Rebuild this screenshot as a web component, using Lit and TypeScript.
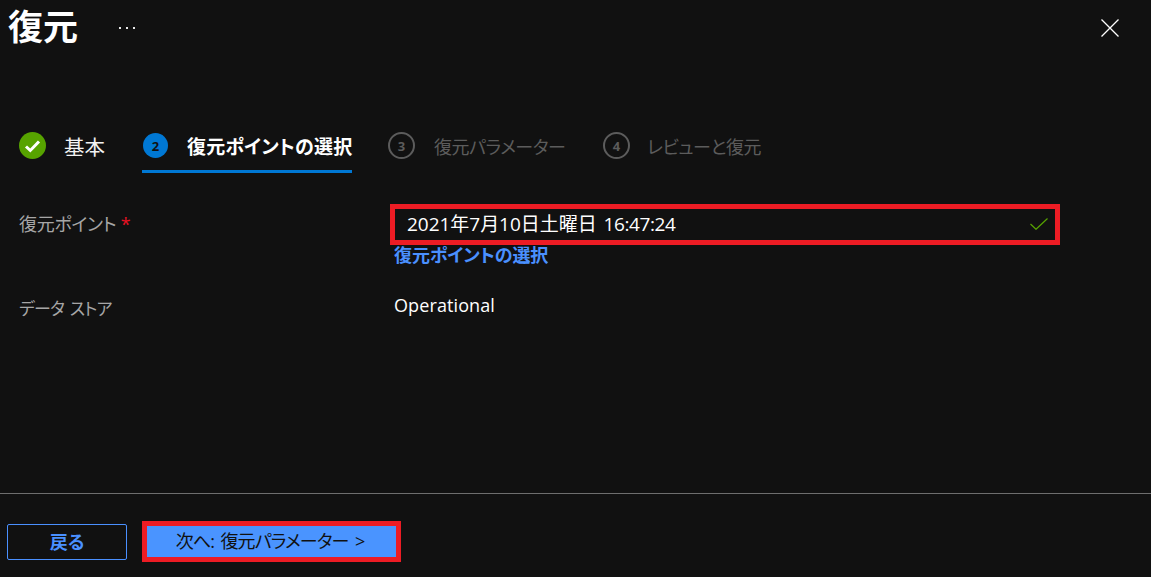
import { html, css, LitElement } from 'lit';
import { customElement } from 'lit/decorators.js';

const steps = [
  { n: 1, label: '基本', state: 'done' },
  { n: 2, label: '復元ポイントの選択', state: 'active' },
  { n: 3, label: '復元パラメーター', state: 'todo' },
  { n: 4, label: 'レビューと復元', state: 'todo' },
];

@customElement('app-root')
export class AppRoot extends LitElement {
  static styles = css`
    :host {
      display: block;
      width: 1151px;
      height: 577px;
      overflow: hidden;
      background: #111111;
      color: #fff;
      font-family: "Open Sans", "Noto Sans CJK JP", sans-serif;
      font-feature-settings: "palt";
    }
    .page { display: flex; flex-direction: column; height: 577px; }

    .header {
      display: flex;
      align-items: center;
      height: 56px;
      padding: 0 32px 0 8px;
    }
    .title { font-size: 35px; font-weight: 700; line-height: 54px; margin-bottom: 2px; width: 111px; }
    .more { display: flex; gap: 5px; }
    .more i { width: 2px; height: 2px; background: #e8e8e8; display: block; }
    .close { margin-left: auto; display: block; }

    .steps { display: flex; margin-top: 65px; padding-left: 19px; height: 52px; }
    .step { display: flex; align-items: center; height: 52px; box-sizing: border-box; border-bottom: 3px solid transparent; }
    .step.s1 { width: 123px; }
    .step.s2 { width: 210px; border-bottom-color: #0078d4; margin-right: 36px; padding-left: 1px; }
    .step.s3 { width: 215px; }
    .badge {
      width: 27px;
      height: 27px;
      box-sizing: border-box;
      border-radius: 50%;
      display: flex;
      align-items: center;
      justify-content: center;
      font-size: 13px;
      font-weight: 700;
      flex: none;
      margin-right: 19px;
    }
    .done .badge { background: #57a300; margin-right: 18px; }
    .active .badge { background: #0078d4; color: #111; width: 25px; height: 25px; }
    .todo .badge { border: 2px solid #5c5c5c; color: #5c5c5c; }
    .s4 .badge { margin-right: 17px; }
    .label { font-size: 18px; letter-spacing: -0.45px; white-space: nowrap; }
    .done .label { color: #f2f2f2; font-size: 20.5px; letter-spacing: 0; }
    .active .label { font-size: 19px; letter-spacing: 0.2px; font-weight: 700; }
    .todo .label { color: #5c5c5c; }

    .form {
      display: grid;
      grid-template-columns: 371px 670px;
      padding: 31px 0 0 19px;
      font-size: 18px;
    }
    .field-label { color: #a6a6a6; line-height: 41px; letter-spacing: -0.3px; }
    .req { color: #e81123; }
    .field-value { display: flex; flex-direction: column; }
    .input {
      display: flex;
      align-items: center;
      justify-content: space-between;
      height: 41px;
      box-sizing: border-box;
      border: 5px solid #ed1c24;
      padding: 0 7px 0 12px;
      font-size: 19px;
      letter-spacing: -0.03px;
    }
    .input span { margin-bottom: 4px; }
    .input .time { margin: 0 0 0 2px; letter-spacing: -0.4px; }
    .input svg { margin-bottom: 1px; }
    .link { color: #4a90ff; font-weight: 700; margin-left: 4px; line-height: 20px; font-size: 18px; letter-spacing: -0.08px; }
    .store-label { color: #a6a6a6; margin-top: 29px; line-height: 30px; font-size: 17px; letter-spacing: -0.8px; word-spacing: 2px; }
    .store-value { margin: 25px 0 0 4px; line-height: 30px; letter-spacing: 0.1px; }

    .footer {
      margin-top: auto;
      border-top: 1px solid #6e6e6e;
      height: 84px;
      display: flex;
      gap: 15px;
      align-items: flex-start;
      padding: 27px 0 0 7px;
      box-sizing: border-box;
    }
    button {
      font: inherit;
      font-feature-settings: "palt";
      box-sizing: border-box;
      font-size: 18px;
      padding: 0 0 3px;
    }
    .back {
      width: 120px;
      height: 36px;
      margin-top: 3px;
      background: transparent;
      border: 1px solid #4a90ff;
      border-radius: 2px;
      color: #4a90ff;
      font-weight: 700;
    }
    .next {
      width: 259px;
      height: 41px;
      background: #4a94ff;
      border: 5px solid #ed1c24;
      color: #111;
      padding-right: 3px;
      letter-spacing: -0.85px;
      word-spacing: 2.5px;
    }
  `;

  private badge(s: { n: number; state: string }) {
    if (s.state === 'done') {
      return html`<span class="badge"><svg width="17" height="14" viewBox="0 0 17 14"><path d="M2 7.5 6.3 11.5 15 2.5" fill="none" stroke="#fff" stroke-width="3"/></svg></span>`;
    }
    return html`<span class="badge">${s.n}</span>`;
  }

  render() {
    return html`
      <div class="page">
        <div class="header">
          <div class="title">復元</div>
          <div class="more"><i></i><i></i><i></i></div>
          <svg class="close" width="18" height="18" viewBox="0 0 18 18"><path d="M.5.5 17.5 17.5M17.5.5 .5 17.5" stroke="#fff" stroke-width="1.3" fill="none"/></svg>
        </div>
        <div class="steps">
          ${steps.map(s => html`
            <div class="step s${s.n} ${s.state}">
              ${this.badge(s)}
              <span class="label">${s.label}</span>
            </div>
          `)}
        </div>
        <div class="form">
          <div class="field-label">復元ポイント <span class="req">*</span></div>
          <div class="field-value">
            <div class="input">
              <span>2021年7月10日土曜日 <span class="time">16:47:24</span></span>
              <svg width="18" height="12" viewBox="0 0 18 12"><path d="M.5 6 6 11.3 17.5.5" fill="none" stroke="#57a300" stroke-width="1.2"/></svg>
            </div>
            <div class="link">復元ポイントの選択</div>
          </div>
          <div class="store-label">データ ストア</div>
          <div class="store-value">Operational</div>
        </div>
        <div class="footer">
          <button class="back">戻る</button>
          <button class="next">次へ: 復元パラメーター &gt;</button>
        </div>
      </div>
    `;
  }
}
